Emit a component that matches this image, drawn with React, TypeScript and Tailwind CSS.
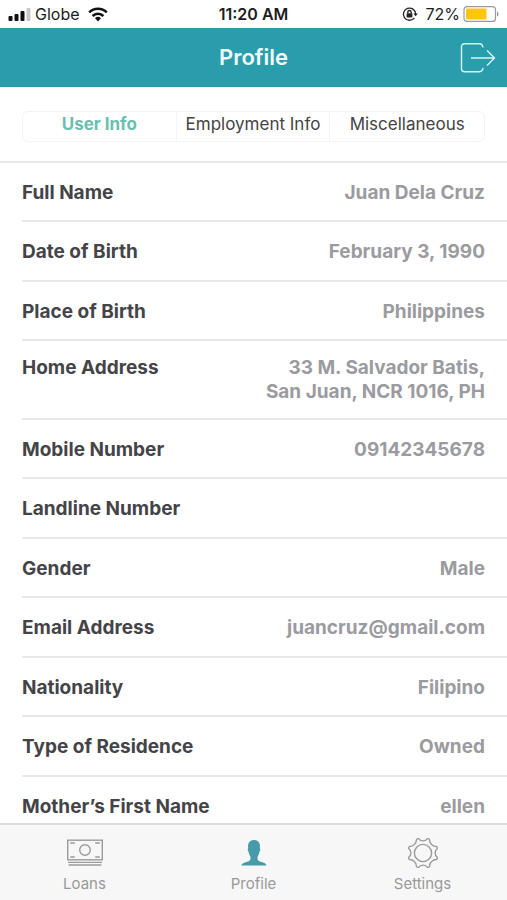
import React, { useState } from 'react';

interface Field {
  label: string;
  value: string[];
}

const fields: Field[] = [
  { label: 'Full Name', value: ['Juan Dela Cruz'] },
  { label: 'Date of Birth', value: ['February 3, 1990'] },
  { label: 'Place of Birth', value: ['Philippines'] },
  { label: 'Home Address', value: ['33 M. Salvador Batis,', 'San Juan, NCR 1016, PH'] },
  { label: 'Mobile Number', value: ['09142345678'] },
  { label: 'Landline Number', value: [] },
  { label: 'Gender', value: ['Male'] },
  { label: 'Email Address', value: ['juancruz@gmail.com'] },
  { label: 'Nationality', value: ['Filipino'] },
  { label: 'Type of Residence', value: ['Owned'] },
  { label: 'Mother’s First Name', value: ['ellen'] },
];

const tabs = ['User Info', 'Employment Info', 'Miscellaneous'];

const SignalIcon = () => (
  <svg width="23" height="14" viewBox="0 0 23 14" fill="#111111" aria-hidden="true">
    <rect x="0.5" y="9" width="4" height="5" rx="1" />
    <rect x="6.5" y="7" width="4" height="7" rx="1" />
    <rect x="12.5" y="4" width="4" height="10" rx="1" />
    <rect x="18.5" y="1" width="4" height="13" rx="1" fill="#c9c9c9" />
  </svg>
);

const WifiIcon = () => (
  <svg width="20" height="15" viewBox="0 0 20 15" fill="none" stroke="#111111" strokeWidth="2.6" aria-hidden="true">
    <path d="M1.2 5.4a12.6 12.6 0 0 1 17.6 0" />
    <path d="M4.6 9a7.7 7.7 0 0 1 10.8 0" />
    <path d="M10 14.4l-3-3.1a4.3 4.3 0 0 1 6 0z" fill="#111111" stroke="none" />
  </svg>
);

const RotationLockIcon = () => (
  <svg width="16" height="16" viewBox="0 0 16 16" fill="none" stroke="#222222" strokeWidth="1.3" aria-hidden="true">
    <path d="M12.4 11.8A6.1 6.1 0 1 1 13.6 8" />
    <path d="M11.4 7.4h4.4l-2.2 2.8z" fill="#222222" stroke="none" />
    <rect x="4.6" y="7.2" width="5.8" height="4.2" rx="0.6" fill="#222222" stroke="none" />
    <path d="M5.8 7.4V6.2a1.7 1.7 0 0 1 3.4 0v1.2" />
  </svg>
);

const BatteryIcon = () => (
  <svg width="36" height="16" viewBox="0 0 36 16" fill="none" aria-hidden="true">
    <rect x="1" y="0.6" width="31.5" height="14.8" rx="3" stroke="#9a9a9a" strokeWidth="1.2" />
    <rect x="3" y="2.4" width="20.5" height="11.2" rx="1" fill="#fbc60d" />
    <path d="M34 5.4c2 .8 2 4.4 0 5.2z" fill="#9a9a9a" />
  </svg>
);

const LogoutIcon = () => (
  <svg width="36" height="32" viewBox="0 0 36 32" fill="none" stroke="#d9f3f5" strokeWidth="1.4" aria-hidden="true">
    <path d="M23 5.5C22.6 3 21.600 1.700 19.500 1.700H4.500A3 3 0 0 0 1.500 4.700v22A3 3 0 0 0 4.500 29.700h15c2.100 0 3.100-1.300 3.500-3.800" />
    <path d="M11 16h23.500M27 8.500l7.500 7.500-7.500 7.500" />
  </svg>
);

const CashIcon = () => (
  <svg width="38" height="28" viewBox="0 0 38 28" fill="none" stroke="#9b9b9b" strokeWidth="1.4" aria-hidden="true">
    <rect x="1.7" y="1.2" width="34.6" height="19.6" />
    <circle cx="19" cy="11" r="5.3" />
    <path d="M4.2 4h4.6M29.200 4h4.600M4.200 18h4.600M29.200 18h4.600" />
    <path d="M2 23.400h34M2.600 26h32.800" />
  </svg>
);

const PersonIcon = () => (
  <svg width="28" height="28" viewBox="0 0 28 28" fill="#469ba9" aria-hidden="true">
    <path d="M26.6 26.500c-.6-2.500-3.500-3-5.800-3.800-2.400-.8-3.200-1.500-3.300-3.300-.1-1.100.2-1.900.7-2.800.7-1.200 1-2.400 1.200-3.900.7-.4.900-1.500.8-2.400 0-.6-.1-.9-.4-1.100.1-1.100.3-2.400 0-3.800C19.200 2.600 17.200 1 14 1S8.800 2.600 8.200 5.400c-.3 1.400-.1 2.700 0 3.800-.3.200-.4.500-.4 1.100-.1.900.1 2 .8 2.400.2 1.500.5 2.700 1.200 3.900.5.9.8 1.700.7 2.800-.1 1.800-.9 2.500-3.300 3.300-2.300.8-5.200 1.300-5.800 3.800z" />
  </svg>
);

const GearIcon = () => (
  <svg width="32" height="32" viewBox="0 0 32 32" fill="none" stroke="#9b9b9b" strokeWidth="1.4" strokeLinejoin="round" aria-hidden="true">
    <circle cx="16" cy="16" r="8.6" />
    <path d="M16 3.9Q18.9 3.9 20.4 1.7Q21.8 1.3 22.5 2.5Q22.5 5.5 24.6 7.4Q26.7 9.5 29.5 9.5Q30.7 10.2 30.3 11.6Q28.1 13.1 28.1 16Q28.1 18.9 30.3 20.4Q30.7 21.8 29.5 22.5Q26.5 22.5 24.6 24.6Q22.5 26.7 22.5 29.5Q21.8 30.7 20.4 30.3Q18.9 28.1 16 28.1Q13.1 28.1 11.6 30.3Q10.2 30.7 9.5 29.5Q9.5 26.5 7.4 24.6Q5.3 22.5 2.5 22.5Q1.3 21.8 1.7 20.4Q3.9 18.9 3.9 16Q3.9 13.1 1.7 11.6Q1.3 10.2 2.5 9.5Q5.5 9.5 7.4 7.4Q9.5 5.3 9.5 2.5Q10.2 1.3 11.6 1.7Q13.1 3.9 16 3.9Z" />
  </svg>
);

const StatusBar = () => (
  <div className="grid h-7 grid-cols-3 items-center bg-white px-2 text-base text-[#1d1d1f]">
    <div className="flex items-center gap-1">
      <SignalIcon />
      <span>Globe</span>
      <span className="ml-1">
        <WifiIcon />
      </span>
    </div>
    <span className="text-center font-semibold">11:20 AM</span>
    <div className="flex items-center justify-end gap-[3px]">
      <RotationLockIcon />
      <span className="ml-1">72%</span>
      <BatteryIcon />
    </div>
  </div>
);

const FieldRow: React.FC<{ field: Field }> = ({ field }) => {
  const spacing = field.value.length > 1 ? 'pt-[15px] pb-[13px]' : 'pt-[18px] pb-[15px] last:pb-1';
  return (
    <div className={`flex grow justify-between border-b-2 border-[#e8e8e8] pr-[22px] last:border-b-0 ${spacing}`}>
      <dt className="text-[#444448]">{field.label}</dt>
      <dd className="text-right text-[#9b9b9f]">
        {field.value.map((line) => (
          <span key={line} className="block">
            {line}
          </span>
        ))}
      </dd>
    </div>
  );
};

const App: React.FC = () => {
  const [activeTab, setActiveTab] = useState('User Info');

  return (
    <div className="flex min-h-screen flex-col bg-white font-['Inter',sans-serif]">
      <StatusBar />

      <header className="grid h-[59px] grid-cols-3 items-center bg-[#299dab] px-[11px]">
        <h1 className="col-start-2 text-center text-[22px] font-semibold text-[#f0fcfc]">Profile</h1>
        <button type="button" aria-label="Log out" className="justify-self-end">
          <LogoutIcon />
        </button>
      </header>

      <div className="border-b-2 border-[#e8e8e8] px-[22px] pt-6 pb-[19px]">
        <div className="grid h-[31px] grid-cols-3 divide-x divide-[#f3f3f3] rounded-md border border-[#f3f3f3]">
          {tabs.map((tab) => (
            <button
              key={tab}
              type="button"
              onClick={() => setActiveTab(tab)}
              className={`pb-1 text-[17px] whitespace-nowrap ${
                tab === activeTab ? 'font-bold text-[#69bfb1]' : 'text-[#444444]'
              }`}
            >
              {tab}
            </button>
          ))}
        </div>
      </div>

      <dl className="flex grow flex-col pl-[22px] text-[19px]/6 font-bold">
        {fields.map((field) => (
          <FieldRow key={field.label} field={field} />
        ))}
      </dl>

      <nav className="grid h-[77px] grid-cols-3 border-t-2 border-[#dcdcdc] bg-[#f7f7f7] text-[15px] text-[#999999]">
        <a href="#loans" className="flex flex-col items-center gap-1 pt-3">
          <span className="flex h-8 items-center">
            <CashIcon />
          </span>
          Loans
        </a>
        <a href="#profile" className="flex flex-col items-center gap-1 pt-3">
          <span className="flex h-8 items-center">
            <PersonIcon />
          </span>
          Profile
        </a>
        <a href="#settings" className="flex flex-col items-center gap-1 pt-3">
          <span className="flex h-8 items-center">
            <GearIcon />
          </span>
          Settings
        </a>
      </nav>
    </div>
  );
};

export default App;
